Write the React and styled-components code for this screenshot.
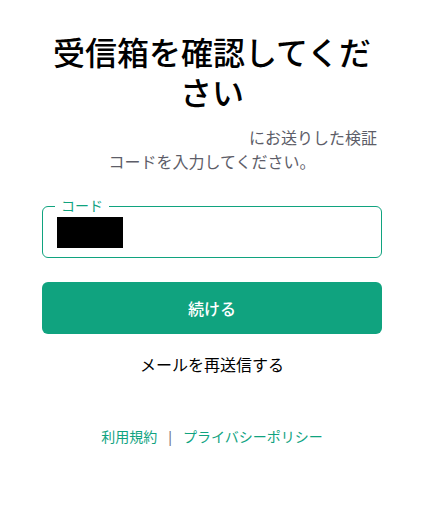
import React from 'react';
import styled, { createGlobalStyle } from 'styled-components';

const GlobalStyle = createGlobalStyle`
  html, body {
    margin: 0;
    padding: 0;
    background: #ffffff;
  }
  body {
    font-family: "Noto Sans", "Noto Sans CJK JP", sans-serif;
    color: #2d333a;
  }
`;

const Page = styled.main`
  display: flex;
  flex-direction: column;
  align-items: center;
  padding: 33px 4px 0 0;
`;

const Title = styled.h1`
  width: 340px;
  margin: 0;
  font-size: 32px;
  line-height: 40px;
  font-weight: 500;
  text-align: center;
  color: #000000;
`;

const Description = styled.p`
  width: 336px;
  margin: 13px 0 0;
  font-size: 16px;
  line-height: 24px;
  text-align: center;
  color: #5d5d68;
`;

const Email = styled.span`
  display: inline-block;
  width: 202px;
`;

const Form = styled.form`
  display: flex;
  flex-direction: column;
  gap: 24px;
  width: 340px;
  margin-top: 32px;
`;

const Field = styled.div`
  position: relative;
  box-sizing: border-box;
  height: 52px;
  border: 1px solid #10a37f;
  border-radius: 6px;
  display: flex;
  align-items: center;
  padding: 0 14px;
`;

const FieldLabel = styled.label`
  position: absolute;
  top: -10px;
  left: 12px;
  padding: 0 6px;
  background: #ffffff;
  font-size: 14px;
  line-height: 18px;
  color: #10a37f;
`;

const Redacted = styled.span`
  display: block;
  width: 66px;
  height: 31px;
  background: #000000;
`;

const Button = styled.button`
  height: 52px;
  border: none;
  border-radius: 6px;
  background: #10a37f;
  color: #ffffff;
  font-family: inherit;
  font-size: 16px;
  font-weight: 500;
  cursor: pointer;
`;

const Resend = styled.button`
  margin-top: 19px;
  border: none;
  background: none;
  padding: 0;
  font-family: inherit;
  font-size: 16px;
  line-height: 24px;
  color: #000000;
  cursor: pointer;
`;

const Footer = styled.footer`
  display: flex;
  align-items: center;
  gap: 9px;
  margin-top: 50px;
  font-size: 14px;
  line-height: 20px;
`;

const FooterLink = styled.a`
  color: #10a37f;
  text-decoration: none;
`;

const Separator = styled.span`
  color: #6e6e80;
`;

export default function App() {
  return (
    <>
      <GlobalStyle />
      <Page>
        <Title>受信箱を確認してください</Title>
        <Description>
          <Email />にお送りした検証コードを入力してください。
        </Description>
        <Form onSubmit={(e) => e.preventDefault()}>
          <Field>
            <FieldLabel>コード</FieldLabel>
            <Redacted />
          </Field>
          <Button type="submit">続ける</Button>
        </Form>
        <Resend type="button">メールを再送信する</Resend>
        <Footer>
          <FooterLink href="#">利用規約</FooterLink>
          <Separator>|</Separator>
          <FooterLink href="#">プライバシーポリシー</FooterLink>
        </Footer>
      </Page>
    </>
  );
}
